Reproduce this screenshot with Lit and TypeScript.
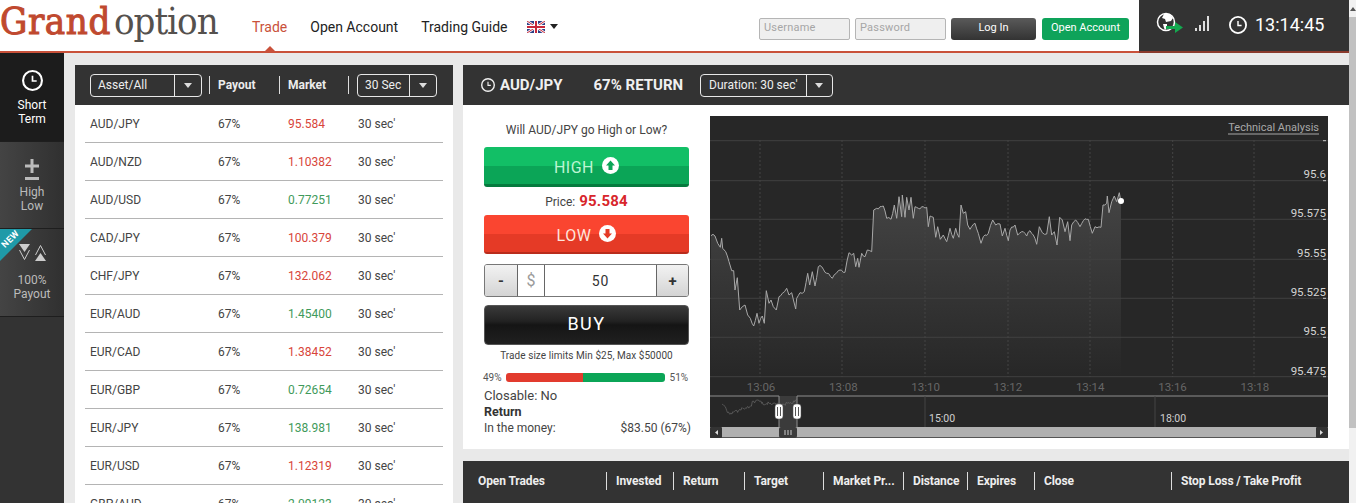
import { LitElement, html, css, svg } from "lit";
import { customElement } from "lit/decorators.js";

const rows: [string, string, string, string][] = [
  ["AUD/JPY", "67%", "95.584", "r"],
  ["AUD/NZD", "67%", "1.10382", "r"],
  ["AUD/USD", "67%", "0.77251", "g"],
  ["CAD/JPY", "67%", "100.379", "r"],
  ["CHF/JPY", "67%", "132.062", "r"],
  ["EUR/AUD", "67%", "1.45400", "g"],
  ["EUR/CAD", "67%", "1.38452", "r"],
  ["EUR/GBP", "67%", "0.72654", "g"],
  ["EUR/JPY", "67%", "138.981", "g"],
  ["EUR/USD", "67%", "1.12319", "r"],
  ["GBP/AUD", "67%", "2.09123", "g"],
];

const trace = [18,377,30,378,38,400,46,412,50,385,53,415,62,425,72,455,80,482,86,482,90,540,97,503,104,600,112,590,120,585,128,615,136,625,146,648,156,610,162,640,172,618,178,640,184,542,192,580,198,570,205,590,214,600,222,560,232,550,245,535,252,555,260,548,272,597,275,565,285,548,298,545,308,490,314,525,322,485,330,528,340,470,350,470,365,490,382,505,400,482,420,487,432,428,440,435,446,430,452,470,458,445,462,472,470,430,480,440,487,420,500,425,506,300,515,295,525,290,535,288,545,325,558,328,568,285,575,325,582,260,590,320,592,255,600,322,605,262,612,300,618,262,625,325,630,290,640,295,650,290,665,292,670,350,675,318,685,322,692,382,698,350,706,388,715,375,725,395,735,355,745,385,752,355,762,382,768,285,775,310,782,305,788,345,795,358,810,340,820,370,828,400,835,380,850,370,863,330,872,345,885,342,892,378,900,355,910,392,915,360,930,345,938,375,950,365,965,378,975,362,985,375,995,403,1003,350,1012,368,1025,372,1033,320,1040,375,1048,365,1056,405,1064,322,1072,330,1080,365,1088,335,1095,392,1100,345,1112,330,1125,350,1135,332,1150,328,1162,370,1170,350,1188,352,1194,285,1205,280,1207,258,1212,308,1220,275,1228,258,1235,275,1243,248,1248,275];

let seed = 17;
const rnd = () => {
  seed = (seed * 16807) % 2147483647;
  return seed / 2147483647 - 0.5;
};
const pts: [number, number][] = [];
for (let i = 0; i < trace.length; i += 2) {
  const x = trace[i] / 3 - 5;
  const y = trace[i + 1] / 3 - 6;
  if (pts.length) {
    const [px, py] = pts[pts.length - 1];
    const steps = Math.floor((x - px) / 1.6);
    for (let s = 1; s < steps; s++) {
      const t = s / steps;
      pts.push([px + (x - px) * t, py + (y - py) * t + rnd() * 3]);
    }
  }
  pts.push([x, y]);
}
const linePath = pts.map((p, i) => `${i ? "L" : "M"}${p[0].toFixed(1)} ${p[1].toFixed(1)}`).join("");
const areaPath = `${linePath}L${pts[pts.length - 1][0].toFixed(1)} 261L${pts[0][0].toFixed(1)} 261Z`;
const miniPts = pts.filter((_, i) => i % 2 === 0).map((p) => [12 + p[0] * 0.182, 284 + (p[1] - 80) * 0.11]);
const miniPath = miniPts.map((p, i) => `${i ? "L" : "M"}${p[0].toFixed(1)} ${p[1].toFixed(1)}`).join("");

const gridY = [24.7, 64.7, 103.3, 143.3, 182.3, 221.3, 260.7];
const gridX = [50, 132, 215, 298, 380, 462.7, 544];
const priceLabels: [string, number][] = [["95.6", 62], ["95.575", 101], ["95.55", 141], ["95.525", 180], ["95.5", 219], ["95.475", 259]];
const timeLabels = ["13:06", "13:08", "13:10", "13:12", "13:14", "13:16", "13:18"];

const chart = svg`
  <defs>
    <linearGradient id="area" x1="0" y1="0" x2="0" y2="1">
      <stop offset="0" stop-color="#444"/>
      <stop offset="1" stop-color="#272727"/>
    </linearGradient>
    <clipPath id="miniclip"><rect x="12" y="280" width="75" height="31"/></clipPath>
  </defs>
  <rect width="618" height="322" fill="#272727"/>
  <path d=${areaPath} fill="url(#area)"/>
  ${gridY.map((y) => svg`<line x1="0" x2="618" y1=${y} y2=${y} stroke="#404040"/>`)}
  ${gridX.map((x) => svg`<line x1=${x} x2=${x} y1="24" y2="261" stroke="#454545" stroke-dasharray="2 2"/>`)}
  <path d=${linePath} fill="none" stroke="#a8a8a8" stroke-width="1"/>
  <circle cx="411" cy="85" r="3" fill="#fff"/>
  <text x="609" y="15" text-anchor="end" class="ta">Technical Analysis</text>
  <line x1="518" x2="609" y1="18" y2="18" stroke="#a8a8a8"/>
  ${priceLabels.map(([t, y]) => svg`<text x="616" y=${y} text-anchor="end" class="price">${t}</text>`)}
  ${gridY.map((y) => svg`<line x1="613" x2="616" y1=${y} y2=${y} stroke="#ccc"/>`)}
  ${timeLabels.map((t, i) => svg`<text x=${51 + i * 82.3} y="275" text-anchor="middle" class="time">${t}</text>`)}
  <rect x="69" y="280" width="18" height="31" fill="#3b3b3b"/>
  <path d=${miniPath} fill="none" stroke="#6a6a6a" stroke-width=".7" clip-path="url(#miniclip)"/>
  <path d="M0 280H69V311M87 311V280H618" fill="none" stroke="#8f8f8f"/>
  <line x1="215" x2="215" y1="280" y2="311" stroke="#444"/>
  <line x1="445" x2="445" y1="280" y2="311" stroke="#444"/>
  <text x="219" y="306" class="nav">15:00</text>
  <text x="450" y="306" class="nav">18:00</text>
  <rect y="311" width="618" height="11" fill="#b0b0b0"/>
  <rect y="321" width="618" height="1" fill="#555"/>
  <rect y="311" width="12" height="11" rx="1" fill="#333"/>
  <path d="M8 314v5l-3-2.500z" fill="#ddd"/>
  <rect x="606" y="311" width="12" height="11" rx="1" fill="#333"/>
  <path d="M610 314v5l3-2.500z" fill="#ddd"/>
  <rect x="69" y="311" width="18" height="11" rx="2" fill="#3b3b3b"/>
  <path d="M75 314v5M78 314v5M81 314v5" stroke="#ccc"/>
  ${[69, 87].map((x) => svg`
    <rect x=${x - 4} y="288" width="8" height="15" rx="3" fill="#fff" stroke="#555" stroke-width=".5"/>
    <path d="M${x - 1.500} 291v9M${x + 1.500} 291v9" stroke="#555"/>
  `)}
`;

const clock = (size: number, sw: number) => html`<svg class="clk" width=${size} height=${size} viewBox="0 0 20 20" fill="none" stroke="currentColor"><circle cx="10" cy="10" r=${10 - sw / 2} stroke-width=${sw}/><path d="M10 5.500V10.500H14" stroke-width=${sw * 0.8}/></svg>`;
const caret = html`<svg class="caret" width="8" height="5" viewBox="0 0 8 5"><path d="M0 0h8L4 5z" fill="currentColor"/></svg>`;

@customElement("app-root")
export class AppRoot extends LitElement {
  static styles = css`
    :host { display: block; width: 1356px; height: 503px; overflow: hidden; background: #e9e9e9; font-family: Roboto, "Liberation Sans", sans-serif; color: #333; }
    * { box-sizing: border-box; }
    .page { display: flex; height: 503px; }
    .main { width: 1349px; flex: none; }
    .sb { flex: 1; background: #f1f1f1; display: flex; flex-direction: column; align-items: stretch; }
    .sb .arrow { height: 17px; display: flex; align-items: center; justify-content: center; color: #555; }
    .sb .thumb { height: 411px; background: #c1c1c1; }

    header { height: 53px; background: #fff; border-bottom: 2px solid #c9513a; display: flex; position: relative; }
    .logo { width: 251px; flex: none; height: 50px; line-height: 43px; white-space: nowrap; font-family: "DejaVu Serif Condensed", "DejaVu Serif", serif; font-size: 38px; }
    .logo b { color: #c0492f; font-weight: 400; -webkit-text-stroke: 1px #c0492f; letter-spacing: .6px; }
    .logo span { color: #55514e; font-weight: 400; margin-left: 3px; font-size: 38px; letter-spacing: -1px; }
    nav { display: flex; align-items: center; height: 50px; padding-top: 3px; font-size: 14px; color: #222; width: 485px; flex: none; }
    nav a { margin-right: 23px; }
    nav a.on { color: #c9513a; margin-left: 1px; margin-right: 23px; }
    .pointer { position: absolute; left: 265px; top: 46px; width: 0; height: 0; border: 5px solid transparent; border-top: 0; border-bottom: 5px solid #c9513a; }
    .flag { width: 18px; height: 12px; margin: 0 5px 0 -3px; display: block; }
    nav .caret { color: #222; }
    .login { display: flex; align-items: flex-start; padding-top: 18px; gap: 5px; width: 403px; flex: none; padding-left: 23px; }
    .inp { height: 22px; width: 91px; background: #efefef; border: 1px solid #b5b5b5; border-radius: 2px; font-size: 11px; color: #a6a6a6; padding: 2px 4px; letter-spacing: .2px; }
    .btn { height: 22px; padding-bottom: 3px; border-radius: 3px; font-size: 11px; display: flex; align-items: center; justify-content: center; color: #fff; }
    .btn.dark { width: 85px; background: linear-gradient(#5a5a5a, #333); }
    .btn.green { width: 87px; margin-left: 1px; background: #0ea35a; }
    .status { width: 210px; flex: none; height: 53px; margin-bottom: -2px; background: #333; color: #fff; display: flex; align-items: center; padding: 0 0 2px 17px; border-bottom: 2px solid #8a3a2c; }
    .globe { margin-top: -1px; display: block; }
    .bars { margin: -4px 0 0 7px; display: block; }
    .status .clk { margin-left: 19px; }
    .time { font-size: 18px; margin-left: 8px; }

    .body { display: flex; height: 450px; }
    aside { width: 64px; flex: none; background: #333; color: #bbb; font-size: 12px; text-align: center; line-height: 14px; }
    .it { height: 87px; border-bottom: 1px solid #1e1e1e; display: flex; flex-direction: column; align-items: center; position: relative; }
    .it.on { height: 89px; background: #1c1c1c; color: #fff; padding-top: 17px; }
    .it.grad { background: linear-gradient(90deg, #444, #303030); }
    .it.hl { padding-top: 17px; }
    .it.pay { padding-top: 15px; height: 88px; }
    .it.on .clk { margin-bottom: 7px; }
    .it.hl svg { margin-bottom: 2px; }
    .it.pay svg { margin-bottom: 12px; margin-left: 1px; }
    .ribbon { position: absolute; left: 0; top: 0; width: 32px; height: 32px; overflow: hidden; }
    .ribbon i { position: absolute; left: 0; top: 0; width: 0; height: 0; border-top: 32px solid #1f9aa8; border-right: 32px solid transparent; }
    .ribbon em { position: absolute; left: 0; top: 5px; color: #fff; font: 700 9px Roboto, sans-serif; transform: rotate(-45deg); letter-spacing: .4px; }

    .assets { width: 378px; margin: 12px 0 0 11px; flex: none; background: #fff; height: 438px; overflow: hidden; }
    .phead { height: 40px; background: #333; color: #fff; display: flex; align-items: center; }
    .sel { height: 23px; border: 1px solid #e8e8e8; border-radius: 4px; display: flex; align-items: center; font-size: 12px; font-weight: 400; color: #eee; }
    .sel .lbl { padding: 0 7px; flex: 1; white-space: nowrap; }
    .sel .arr { height: 100%; border-left: 1px solid #e8e8e8; display: flex; align-items: center; justify-content: center; }
    .sel .arr svg { color: #ddd; }
    .assets .sel.a { width: 112px; margin-left: 15px; }
    .assets .sel.a .arr { width: 27px; }
    .assets .sel.b { width: 80px; margin-left: 8px; }
    .assets .sel.b .arr { width: 27px; }
    .sep { width: 1px; height: 18px; background: #ddd; flex: none; }
    .sep.first { margin-left: 7px; }
    .hb { font-size: 12px; font-weight: 700; color: #ececec; margin-left: 8px; }
    .hb.p { width: 61px; }
    .hb.m { width: 60px; }
    .row { display: grid; grid-template-columns: 128px 70px 70px 1fr; height: 38px; margin: 0 10px; padding: 0 5px; align-items: center; border-bottom: 1px solid #b4b4b4; font-size: 12px; color: #444; }
    .row .r { color: #d8453a; }
    .row .g { color: #3f9a5b; }
    .row:last-child { border-bottom: 0; }

    .right { flex: 1; margin: 12px 0 0 10px; display: flex; flex-direction: column; }
    .trade { height: 384px; background: #fff; flex: none; }
    .trade .phead { font-size: 15px; font-weight: 700; color: #f0f0f0; padding-left: 18px; }
    .trade .phead .clk { margin-right: 5px; }
    .ret { margin-left: 31px; margin-right: 17px; }
    .sel.c { width: 133px; }
    .sel.c .lbl { padding: 0 8px; }
    .sel.c .arr { width: 27px; }
    .tbody { display: flex; padding: 11px 21px 0 21px; height: 344px; }
    .form { width: 205px; flex: none; margin-right: 21px; font-size: 12px; color: #444; }
    .q { text-align: center; height: 21px; line-height: 28px; margin-bottom: 10px; font-size: 12px; padding-top: 0; }
    .big { height: 40px; border-radius: 3px; color: #dff; font-size: 16px; display: flex; align-items: center; justify-content: center; gap: 8px; letter-spacing: .5px; }
    .big span { padding-top: 3px; }
    .big.h { background: linear-gradient(#12bf66 0 50%, #0ba557 50% 100%); border-bottom: 3px solid #057a3e; color: #bdf5d3; }
    .big.l { background: linear-gradient(#fa4530 0 50%, #e53a26 50% 100%); border-bottom: 2px solid #b92c1c; color: #ffe4dc; height: 39px; }
    .big svg { display: block; }
    .price { text-align: center; height: 28px; line-height: 28px; font-size: 12px; }
    .price b { font-size: 15px; color: #d8262c; letter-spacing: .2px; font-weight: 700; margin-left: 1px; }
    .amount { margin-top: 10px; height: 33px; border: 1px solid #777; border-radius: 3px; display: flex; overflow: hidden; }
    .amount > div { display: flex; align-items: center; justify-content: center; }
    .pm { width: 32px; background: linear-gradient(#f2f2f2, #d4d4d4); font-weight: 700; font-size: 15px; color: #333; }
    .cur { width: 28px; border-left: 1px solid #666; border-right: 1px solid #666; color: #9a9a9a; font-size: 16px; }
    .val { flex: 1; font-size: 14px; letter-spacing: 1px; color: #333; border-right: 1px solid #666; }
    .amount .pm:last-child { width: 31px; }
    .buy { margin-top: 8px; height: 40px; padding-bottom: 4px; border-radius: 4px; background: linear-gradient(#3a3a3a, #222 40%, #151515 50%, #202020); border: 1px solid #555; color: #fff; font-size: 18px; letter-spacing: 1.500px; display: flex; align-items: center; justify-content: center; }
    .lim { text-align: center; font-size: 10px; margin-top: 4px; height: 14px; line-height: 14px; letter-spacing: .05px; }
    .pb { display: flex; align-items: center; font-size: 10px; color: #555; margin: 8px 0 0 -1px; height: 13px; width: 208px; }
    .pb .track { width: 159px; margin: 0 5px 0 4px; height: 9px; border-radius: 3px; display: flex; overflow: hidden; flex: none; }
    .pb .track i { display: block; height: 100%; }
    .bad { width: 49%; background: #e23b2e; }
    .good { width: 51%; background: #0ba557; }
    .info { font-size: 13px; line-height: 16px; margin-top: 4px; }
    .info b { font-weight: 700; color: #333; display: block; font-size: 12.500px; }
    .inm { display: flex; justify-content: space-between; width: 207px; font-size: 12px; }
    .chart { flex: 1; display: block; height: 322px; }
    .chart .ta { font: 11px Roboto, sans-serif; fill: #a8a8a8; }
    .chart .price { font: 11.500px Roboto, sans-serif; fill: #d4d4d4; }
    .chart .time { font: 11.500px Roboto, sans-serif; fill: #666; margin: 0; }
    .chart .nav { font: 10.500px Roboto, sans-serif; fill: #d0d0d0; }

    .trades { margin-top: 12px; height: 42px; padding-bottom: 2px; background: #333; color: #eee; font-size: 12px; font-weight: 700; letter-spacing: -.1px; display: flex; align-items: center; padding-left: 15px; white-space: nowrap; }
    .trades span { display: block; padding-left: 9px; height: 18px; line-height: 18px; border-left: 1px solid #ddd; overflow: hidden; flex: none; }
    .trades span:first-child { border: 0; padding: 0; }
  `;

  render() {
    const tw = [128, 67, 71, 79, 80, 64, 67, 137, 170];
    const tn = ["Open Trades", "Invested", "Return", "Target", "Market Pr...", "Distance", "Expires", "Close", "Stop Loss / Take Profit"];
    return html`
      <div class="page">
        <div class="main">
          <header>
            <div class="logo"><b>Grand</b><span>option</span></div>
            <nav>
              <a class="on">Trade</a><a>Open Account</a><a>Trading Guide</a>
              <svg class="flag" viewBox="0 0 18 12"><rect width="18" height="12" fill="#2b3f86"/><path d="M0 0L18 12M18 0L0 12" stroke="#fff" stroke-width="2.500"/><path d="M0 0L18 12M18 0L0 12" stroke="#c8283a" stroke-width="1"/><path d="M9 0V12M0 6H18" stroke="#fff" stroke-width="4"/><path d="M9 0V12M0 6H18" stroke="#c8283a" stroke-width="2"/></svg>
              ${caret}
            </nav>
            <i class="pointer"></i>
            <div class="login">
              <div class="inp">Username</div><div class="inp">Password</div>
              <div class="btn dark">Log In</div><div class="btn green">Open Account</div>
            </div>
            <div class="status">
              <svg class="globe" width="31" height="24" viewBox="0 0 31 24"><circle cx="10" cy="10" r="8.500" fill="none" stroke="#fff" stroke-width="1.500"/><path d="M8 2l6 0 3 4-2 3-5 1-1-3-3-1z M7 12l4 0 0 4-2 2-1-2z" fill="#fff"/><path d="M10 14h9v-4l8 5.500-8 5.500v-4h-9z" fill="#14a84f"/></svg>
              <svg class="bars" width="16" height="16" viewBox="0 0 16 16"><path d="M1 13h2v3H1zM5 10h2v6H5zM9 6h2v10H9zM13 1h2v15h-2z" fill="#ddd"/></svg>
              ${clock(18, 2)}
              <span class="time">13:14:45</span>
            </div>
          </header>
          <div class="body">
            <aside>
              <div class="it on">${clock(21, 2)}Short<br />Term</div>
              <div class="it grad hl">
                <svg width="16" height="24" viewBox="0 0 16 24"><path d="M8 0v14M1 7h14M1 19.500h14" stroke="#bbb" stroke-width="3" fill="none"/></svg>
                High<br />Low
              </div>
              <div class="it grad pay">
                <div class="ribbon"><i></i><em>NEW</em></div>
                <svg width="28" height="17" viewBox="0 0 28 17"><path d="M0 0h11L5.500 8z" fill="#ccc"/><path d="M0.500 6l5 9.500 5-9.500" fill="none" stroke="#ccc"/><path d="M16 17h11L21.500 9z" fill="#ccc"/><path d="M16.500 11l5-9.500 5 9.500" fill="none" stroke="#ccc"/></svg>
                100%<br />Payout
              </div>
            </aside>
            <section class="assets">
              <div class="phead">
                <div class="sel a"><span class="lbl">Asset/All</span><span class="arr">${caret}</span></div>
                <i class="sep first"></i>
                <span class="hb p">Payout</span>
                <i class="sep"></i>
                <span class="hb m">Market</span>
                <i class="sep"></i>
                <div class="sel b"><span class="lbl">30 Sec</span><span class="arr">${caret}</span></div>
              </div>
              ${rows.map(([a, p, m, c]) => html`<div class="row"><span>${a}</span><span>${p}</span><span class=${c}>${m}</span><span>30 sec'</span></div>`)}
            </section>
            <div class="right">
              <section class="trade">
                <div class="phead">
                  ${clock(14, 2)}<span>AUD/JPY</span><span class="ret">67% RETURN</span>
                  <div class="sel c"><span class="lbl">Duration: 30 sec'</span><span class="arr">${caret}</span></div>
                </div>
                <div class="tbody">
                  <div class="form">
                    <div class="q">Will AUD/JPY go High or Low?</div>
                    <div class="big h"><span>HIGH</span>
                      <svg width="17" height="17" viewBox="0 0 17 17"><circle cx="8.500" cy="8.500" r="8.500" fill="#fff"/><path d="M8.500 3.500L13 8.500H10.500V13H6.500V8.500H4z" fill="#0ba557"/></svg>
                    </div>
                    <div class="price">Price: <b>95.584</b></div>
                    <div class="big l"><span>LOW</span>
                      <svg width="17" height="17" viewBox="0 0 17 17"><circle cx="8.500" cy="8.500" r="8.500" fill="#fff"/><path d="M8.500 13.500L13 8.500H10.500V4H6.500V8.500H4z" fill="#e53a26"/></svg>
                    </div>
                    <div class="amount"><div class="pm">-</div><div class="cur">$</div><div class="val">50</div><div class="pm">+</div></div>
                    <div class="buy">BUY</div>
                    <div class="lim">Trade size limits Min $25, Max $50000</div>
                    <div class="pb"><span>49%</span><div class="track"><i class="bad"></i><i class="good"></i></div><span>51%</span></div>
                    <div class="info">Closable: No<b>Return</b><div class="inm"><span>In the money:</span><span>$83.50 (67%)</span></div></div>
                  </div>
                  <svg class="chart" viewBox="0 0 618 322">${chart}</svg>
                </div>
              </section>
              <section class="trades">
                ${tn.map((t, i) => html`<span style="width:${tw[i]}px">${t}</span>`)}
              </section>
            </div>
          </div>
        </div>
        <div class="sb"><div class="arrow"><svg width="6" height="4" viewBox="0 0 6 4"><path d="M3 0l3 4H0z" fill="currentColor"/></svg></div><div class="thumb"></div></div>
      </div>
    `;
  }
}
